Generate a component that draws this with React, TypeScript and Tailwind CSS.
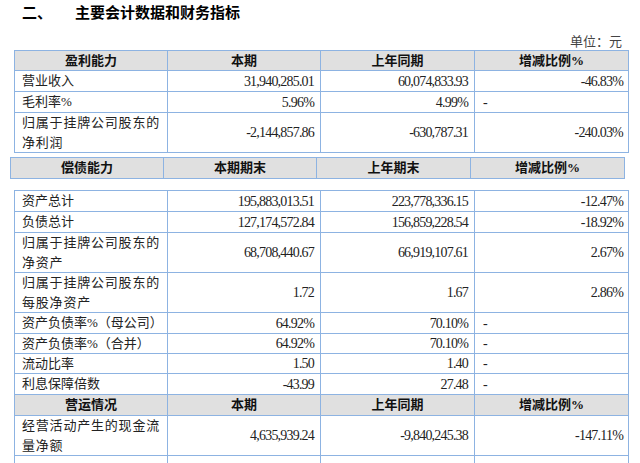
import React from "react";

type Row = {
  label: string;
  a: string;
  b: string;
  c: string;
  tall?: boolean;
  h?: string;
};

const cols = "grid grid-cols-[153px_153px_154px_154px]";
const cell = "border-r border-b border-[#8db3e2] flex items-center";

function HeaderRow({ titles, h = "h-[21px]" }: { titles: string[]; h?: string }) {
  return (
    <div className={cols}>
      {titles.map((t) => (
        <div key={t} className={`${cell} ${h} justify-center bg-[#e0e0e0] font-bold text-[13px] text-[#111]`}>
          {t}
        </div>
      ))}
    </div>
  );
}

function DataRow({ row }: { row: Row }) {
  const h = row.h ?? (row.tall ? "h-[40px]" : "h-[21px]");
  const dash = row.c === "-";
  return (
    <div className={cols}>
      <div
        className={`${cell} ${h} pl-[7px] text-[13px] text-[#222] leading-[20px] ${
          row.tall ? "tracking-[0.8px]" : ""
        }`}
      >
        <span>{row.label}</span>
      </div>
      <div className={`${cell} ${h} justify-end pr-[6px] text-[14px] tracking-[-0.8px] text-[#222]`}>{row.a}</div>
      <div className={`${cell} ${h} justify-end pr-[6px] text-[14px] tracking-[-0.8px] text-[#222]`}>{row.b}</div>
      <div
        className={`${cell} ${h} ${
          dash ? "justify-start pl-[8px]" : "justify-end pr-[5px]"
        } text-[14px] tracking-[-0.8px] text-[#222]`}
      >
        {row.c}
      </div>
    </div>
  );
}

const profit: Row[] = [
  { label: "营业收入", a: "31,940,285.01", b: "60,074,833.93", c: "-46.83%" },
  { label: "毛利率%", a: "5.96%", b: "4.99%", c: "-" },
  { label: "归属于挂牌公司股东的净利润", a: "-2,144,857.86", b: "-630,787.31", c: "-240.03%", tall: true },
];

const debt: Row[] = [
  { label: "资产总计", a: "195,883,013.51", b: "223,778,336.15", c: "-12.47%" },
  { label: "负债总计", a: "127,174,572.84", b: "156,859,228.54", c: "-18.92%" },
  { label: "归属于挂牌公司股东的净资产", a: "68,708,440.67", b: "66,919,107.61", c: "2.67%", tall: true },
  { label: "归属于挂牌公司股东的每股净资产", a: "1.72", b: "1.67", c: "2.86%", tall: true },
  { label: "资产负债率%（母公司）", a: "64.92%", b: "70.10%", c: "-" },
  { label: "资产负债率%（合并）", a: "64.92%", b: "70.10%", c: "-", h: "h-[20px]" },
  { label: "流动比率", a: "1.50", b: "1.40", c: "-", h: "h-[20px]" },
  { label: "利息保障倍数", a: "-43.99", b: "27.48", c: "-" },
];

const ops: Row[] = [
  { label: "经营活动产生的现金流量净额", a: "4,635,939.24", b: "-9,840,245.38", c: "-147.11%", tall: true },
  { label: "", a: "", b: "", c: "" },
];

export default function App() {
  return (
    <div
      className="w-[640px] h-[463px] overflow-hidden bg-white text-black"
      style={{ fontFamily: '"Liberation Serif", "Noto Sans CJK SC", serif' }}
    >
      <div className="h-[26px] flex items-center pl-[22px] text-[15px] font-bold">
        <span>二、</span>
        <span className="ml-[23px]">主要会计数据和财务指标</span>
      </div>
      <div className="h-[24px] flex items-end justify-end pr-[18px] text-[13px] leading-[16px] text-[#444]">
        单位：元
      </div>

      <div className="ml-[14px] w-[615px] border-l border-t border-[#8db3e2]">
        <HeaderRow titles={["盈利能力", "本期", "上年同期", "增减比例%"]} h="h-[20px]" />
        {profit.map((r) => (
          <DataRow key={r.label} row={r} />
        ))}
      </div>

      <div className="mt-[4px] ml-[10px] w-[615px] border-l border-t border-[#8db3e2]">
        <HeaderRow titles={["偿债能力", "本期期末", "上年期末", "增减比例%"]} />
      </div>

      <div className="mt-[11px] ml-[14px] w-[615px] border-l border-t border-[#8db3e2]">
        {debt.map((r) => (
          <DataRow key={r.label} row={r} />
        ))}
        <HeaderRow titles={["营运情况", "本期", "上年同期", "增减比例%"]} />
        {ops.map((r, i) => (
          <DataRow key={i} row={r} />
        ))}
      </div>
    </div>
  );
}
